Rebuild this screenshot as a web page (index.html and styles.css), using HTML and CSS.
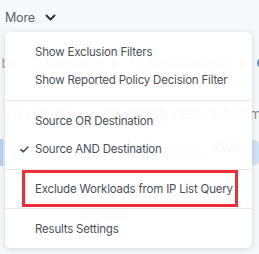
FILE: index.html
```html
<!DOCTYPE html>
<html lang="en">
<head>
<meta charset="UTF-8">
<meta name="viewport" content="width=device-width, initial-scale=1.0">
<title>More menu</title>
<link rel="stylesheet" href="styles.css">
</head>
<body>
<div class="page">
<div class="toolbar">
<span class="more-label">More</span>
<svg class="chevron" width="11" height="7" viewBox="0 0 11 7" fill="none" stroke="currentColor" stroke-width="2" stroke-linecap="round" stroke-linejoin="round">
<polyline points="1.5,1.5 5.5,5.5 9.5,1.5"/>
</svg>
</div>

<!-- content behind the dropdown -->
<div class="backdrop">
<div class="group-row">
<span class="group-label">Group by</span>
<span class="chip"><span class="chip-icon"></span>Locations <span class="chip-x">×</span></span>
<span class="chip"><span class="chip-icon"></span>Environments <span class="chip-x">×</span></span>
<span class="chip"><span class="chip-icon blue">A</span>Apps</span>
</div>
<div class="note">This graph is automatically prepared from the</div>
<div class="stats-row">
<div class="stat-card"></div>
<span class="stat-label">Unknown FQDNs</span>
<span class="count">203</span>
<div class="stat-btn"></div>
</div>
<div class="ghost-line">Created</div>
</div>

<div class="menu">
<div class="menu-group first">
<div class="menu-item">Show Exclusion Filters</div>
<div class="menu-item">Show Reported Policy Decision Filter</div>
</div>
<div class="menu-group">
<div class="menu-item">Source OR Destination</div>
<div class="menu-item checked">
<svg class="check" width="9" height="7" viewBox="0 0 9 7" fill="none" stroke="currentColor" stroke-width="1.6" stroke-linecap="round" stroke-linejoin="round">
<polyline points="1,3.6 3.3,5.8 8,1"/>
</svg>
Source AND Destination</div>
</div>
<div class="menu-group highlight-group">
<div class="menu-item highlighted">Exclude Workloads from IP List Query</div>
</div>
<div class="menu-group last">
<div class="menu-item">Results Settings</div>
</div>
</div>
</div>
</body>
</html>
```

FILE: styles.css
```css
body {
    margin: 0;
    background-color: #f6f9fc;
    font-family: Inter, "Noto Sans", sans-serif;
    color: #4b5057;
}

.page {
    position: relative;
    width: 259px;
    height: 254px;
    overflow: hidden;
}

.toolbar {
    display: flex;
    align-items: center;
    gap: 10px;
    height: 32px;
    padding-left: 5px;
    padding-top: 2px;
    box-sizing: border-box;
}

.more-label {
    font-size: 12.5px;
    letter-spacing: -0.2px;
    color: #5b6169;
}

.chevron {
    color: #2f3338;
}

/* background content, faded by the menu */
.backdrop {
    display: flex;
    flex-direction: column;
    font-size: 13px;
    color: #9aa3ad;
}

.group-row {
    display: flex;
    align-items: center;
    gap: 12px;
    height: 26px;
    margin-top: 18px;
    margin-left: -40px;
    white-space: nowrap;
}

.chip {
    display: flex;
    align-items: center;
    gap: 5px;
    color: #8aa0bd;
}

.chip-icon {
    width: 10px;
    height: 10px;
    border-radius: 50%;
    border: 1.5px solid #8aa0bd;
    font-size: 8px;
    display: flex;
    align-items: center;
    justify-content: center;
}

.chip-icon.blue {
    background: #6d8fd8;
    border-color: #6d8fd8;
    color: white;
}

.chip-x {
    color: #8a96a3;
}

.note {
    margin-top: 30px;
    padding-left: 5px;
    white-space: nowrap;
    color: #7e8791;
}

.stats-row {
    display: flex;
    align-items: center;
    height: 27px;
    margin-top: 17px;
    gap: 6px;
    white-space: nowrap;
}

.stat-card {
    width: 50px;
    height: 27px;
    background: #e3eefb;
    border-left: 3px solid #b9d2f1;
}

.stat-label {
    margin-left: 70px;
    color: #8aa0bd;
}

.count {
    background: #aab2bc;
    color: white;
    font-size: 10px;
    font-weight: 600;
    border-radius: 7px;
    padding: 0 4px;
    align-self: flex-start;
    margin-top: 1px;
}

.stat-btn {
    width: 28px;
    height: 25px;
    background: #cfe2f7;
    border-radius: 5px;
}

.ghost-line {
    margin-top: 40px;
    margin-left: 78px;
    color: #9aa3ad;
}

/* dropdown */
.menu {
    position: absolute;
    left: 5px;
    top: 32px;
    width: 247px;
    background-color: rgba(255, 255, 255, 0.95);
    border-radius: 6px;
    box-shadow: 0 1px 6px rgba(0, 0, 0, 0.14);
    font-size: 11.5px;
    letter-spacing: -0.2px;
}

.menu-group {
    padding: 6px 0;
    border-top: 1px solid #e4e7eb;
}

.menu-group.first {
    border-top: none;
}

.menu-group.highlight-group {
    padding: 0 0 1px;
}

.menu-group.last {
    padding: 6px 0 5px;
}

.menu-item {
    position: relative;
    display: flex;
    align-items: center;
    height: 28px;
    padding-left: 30px;
    color: #4b5057;
    white-space: nowrap;
}

.check {
    position: absolute;
    left: 15px;
    top: 11px;
    color: #4b5057;
}

.menu-item.highlighted {
    height: 37px;
    margin: 0 14px 0 17px;
    padding-left: 10px;
    border: 3px solid #ec2f3a;
    box-sizing: border-box;
}
```
